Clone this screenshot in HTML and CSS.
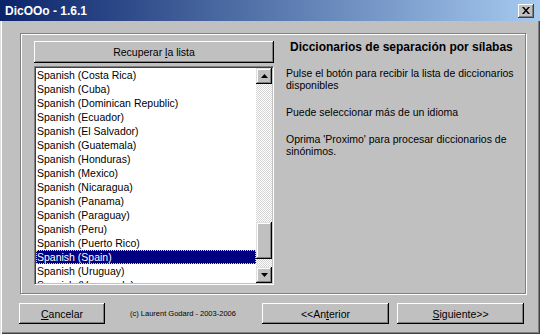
FILE: index.html
```html
<!DOCTYPE html>
<html>
  <head>
    <meta charset="utf-8">
    <link rel="stylesheet" href="styles.css">
  </head>
  <body>
    <div class="window">
      <div class="titlebar">
        <span class="title">DicOOo - 1.6.1</span>
        <span class="close-btn">
          <svg width="8" height="7" viewBox="0 0 8 7">
            <path d="M0 0h2l2 2.5l2-2.5h2l-3 3.5l3 3.5h-2l-2-2.5l-2 2.5h-2l3-3.5z" fill="#000" />
          </svg>
        </span>
      </div>
      <div class="client">
        <div class="group">
          <div class="left-col">
            <div class="btn fetch-btn"><span>Recuperar <u>l</u>a lista</span></div>
            <div class="listbox">
              <ul class="list-items">
                <li>Spanish (Costa Rica)</li>
                <li>Spanish (Cuba)</li>
                <li>Spanish (Dominican Republic)</li>
                <li>Spanish (Ecuador)</li>
                <li>Spanish (El Salvador)</li>
                <li>Spanish (Guatemala)</li>
                <li>Spanish (Honduras)</li>
                <li>Spanish (Mexico)</li>
                <li>Spanish (Nicaragua)</li>
                <li>Spanish (Panama)</li>
                <li>Spanish (Paraguay)</li>
                <li>Spanish (Peru)</li>
                <li>Spanish (Puerto Rico)</li>
                <li class="selected">Spanish (Spain)</li>
                <li>Spanish (Uruguay)</li>
                <li>Spanish (Venezuela)</li>
              </ul>
              <div class="scrollbar">
                <div class="arrow">
                  <svg width="7" height="4" viewBox="0 0 7 4"><path d="M3.5 0L7 4H0z" fill="#000" /></svg>
                </div>
                <div class="track"><div class="thumb"></div></div>
                <div class="arrow">
                  <svg width="7" height="4" viewBox="0 0 7 4"><path d="M0 0h7L3.5 4z" fill="#000" /></svg>
                </div>
              </div>
            </div>
          </div>
          <div class="right-col">
            <h3 class="heading">Diccionarios de separación por sílabas</h3>
            <p>Pulse el botón para recibir la lista de diccionarios disponibles</p>
            <p>Puede seleccionar más de un idioma</p>
            <p>Oprima 'Proximo' para procesar diccionarios de sinónimos.</p>
          </div>
        </div>
        <div class="footer">
          <div class="btn cancel-btn"><span><u>C</u>ancelar</span></div>
          <span class="copyright">(c) Laurent Godard - 2003-2006</span>
          <div class="btn nav-btn prev-btn"><span>&lt;&lt;An<u>t</u>erior</span></div>
          <div class="btn nav-btn"><span><u>S</u>iguiente&gt;&gt;</span></div>
        </div>
      </div>
    </div>
  </body>
</html>
```

FILE: styles.css
```css
body {
  margin: 0;
  background: #c0c0c0;
  font-family: "Liberation Sans", Arial, sans-serif;
  font-size: 10.5px;
  color: #000;
}
.window {
  width: 540px;
  height: 334px;
  box-sizing: border-box;
  background: #c0c0c0;
  box-shadow: inset 1px 0 #dfdfdf, inset 2px 0 #fff, inset -1px -1px #404040, inset -2px -2px #808080;
}
.titlebar {
  height: 21px;
  display: flex;
  align-items: center;
  justify-content: space-between;
  padding: 0 6px 0 5px;
  background: linear-gradient(to right, #0a246a, #a6caf0);
}
.title {
  color: #fff;
  font-weight: bold;
  font-size: 12px;
}
.close-btn {
  width: 16px;
  height: 14px;
  box-sizing: border-box;
  display: flex;
  align-items: center;
  justify-content: center;
  background: #c0c0c0;
  box-shadow: inset -1px -1px #404040, inset 1px 1px #fff, inset -2px -2px #808080;
}
.client {
  padding-top: 12px;
}
.group {
  margin-left: 20px;
  width: 506px;
  height: 261px;
  box-sizing: border-box;
  border: 1px solid #808080;
  box-shadow: inset 1px 1px 0 #fff, 1px 1px 0 #fff;
  padding: 7px 0 0 13px;
  display: flex;
  gap: 12px;
}
.left-col {
  width: 240px;
  display: flex;
  flex-direction: column;
  gap: 3px;
}
.btn {
  box-sizing: border-box;
  display: flex;
  align-items: center;
  justify-content: center;
  background: #c0c0c0;
  box-shadow: inset -1px -1px #000, inset 1px 1px #fff, inset -2px -2px #808080;
}
.fetch-btn {
  height: 22px;
}
.listbox {
  height: 219px;
  box-sizing: border-box;
  background: #fff;
  border: 1px solid;
  border-color: #808080 #fff #fff #808080;
  box-shadow: inset 1px 1px #404040, inset -1px -1px #c0c0c0;
  padding: 1px;
  display: flex;
  overflow: hidden;
}
.list-items {
  flex: 1;
  margin: 0;
  padding: 0;
  list-style: none;
  overflow: hidden;
}
.list-items li {
  height: 14px;
  line-height: 14px;
  padding-left: 1px;
  white-space: nowrap;
}
.list-items .selected {
  background: #000080;
  color: #fff;
  outline: 1px dotted #e8e070;
  outline-offset: -1px;
}
.scrollbar {
  width: 16px;
  display: flex;
  flex-direction: column;
}
.arrow {
  height: 16px;
  box-sizing: border-box;
  display: flex;
  align-items: center;
  justify-content: center;
  background: #c0c0c0;
  box-shadow: inset -1px -1px #000, inset 1px 1px #dfdfdf, inset -2px -2px #808080, inset 2px 2px #fff;
}
.track {
  flex: 1;
  background: conic-gradient(#fff 25%, #d4d4d4 0 50%, #fff 0 75%, #d4d4d4 0) 0 0 / 2px 2px;
}
.thumb {
  margin-top: 138px;
  height: 37px;
  box-sizing: border-box;
  background: #c0c0c0;
  box-shadow: inset -1px -1px #000, inset 1px 1px #dfdfdf, inset -2px -2px #808080, inset 2px 2px #fff;
}
.right-col {
  flex: 1;
}
.heading {
  margin: 0 0 14px;
  padding-left: 4px;
  font-size: 12px;
  line-height: 12px;
  font-weight: bold;
}
.right-col p {
  margin: 0 0 15px;
  line-height: 12px;
  padding-right: 8px;
}
.footer {
  margin-top: 9px;
  padding: 0 16px 0 19px;
  display: flex;
  align-items: center;
}
.cancel-btn {
  width: 86px;
  height: 21px;
}
.copyright {
  margin-left: 25px;
  font-size: 7.5px;
}
.nav-btn {
  width: 127px;
  height: 21px;
}
.prev-btn {
  margin-left: auto;
  margin-right: 8px;
}
```
